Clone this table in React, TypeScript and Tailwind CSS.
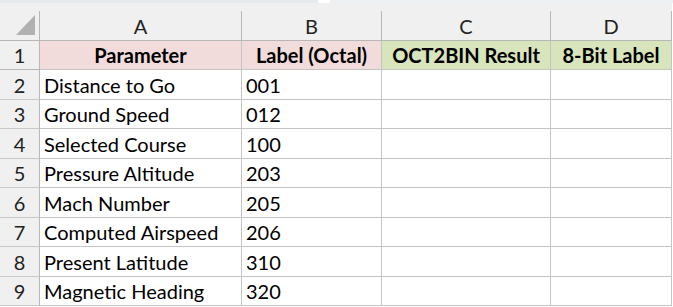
import React from "react";

const rows: [string, string][] = [
  ["Distance to Go", "001"],
  ["Ground Speed", "012"],
  ["Selected Course", "100"],
  ["Pressure Altitude", "203"],
  ["Mach Number", "205"],
  ["Computed Airspeed", "206"],
  ["Present Latitude", "310"],
  ["Magnetic Heading", "320"],
];

const heights = ["h-[30px]", "h-[29px]", "h-[30px]", "h-[29px]", "h-[30px]", "h-[29px]", "h-[30px]", "h-[29px]"];

export default function App() {
  return (
    <div
      className="w-[673px] h-[307px] bg-white overflow-hidden text-black"
      style={{ fontFamily: "Lato, 'Liberation Sans', sans-serif" }}
    >
      <div className="flex h-[3px]">
        <div className="w-[318px] bg-[#e6eaef]" />
        <div className="w-[12px] bg-white" />
        <div className="flex-1 bg-[#eef1f4]" />
      </div>
      <div className="h-[8px] w-[672px] bg-[#f0f0f0]" />
      {/* column header row */}
      <div className="flex h-[30px] text-[20px] text-[#222]">
        <div className="relative w-[40px] bg-[#f0f0f0] border-r border-b border-[#b7b7b7]">
          <svg className="absolute left-[16px] top-[4px]" width="20" height="20" viewBox="0 0 20 20">
            <polygon points="19,0 19,20 0,20" fill="#b1b1b1" />
          </svg>
        </div>
        <div className="w-[202px] bg-[#f0f0f0] border-r border-b border-[#b7b7b7] flex items-center justify-center">A</div>
        <div className="w-[140px] bg-[#f0f0f0] border-r border-b border-[#b7b7b7] flex items-center justify-center">B</div>
        <div className="w-[169px] bg-[#f0f0f0] border-r border-b border-[#b7b7b7] flex items-center justify-center">C</div>
        <div className="w-[121px] bg-[#f0f0f0] border-r border-b border-[#b7b7b7] flex items-center justify-center">D</div>
      </div>
      {/* row 1 */}
      <div className="flex h-[29px] text-[20px]">
        <div className="w-[40px] bg-[#f0f0f0] border-r border-b border-[#b7b7b7] flex items-center justify-center text-[#222]">1</div>
        <div className="w-[202px] bg-[#f2dcdb] border-r border-b border-[#c4c4c4] flex items-center justify-center font-bold">Parameter</div>
        <div className="w-[140px] bg-[#f2dcdb] border-r border-b border-[#c4c4c4] flex items-center justify-center font-bold whitespace-nowrap">Label (Octal)</div>
        <div className="w-[169px] bg-[#d8e4bc] border-r border-b border-[#c4c4c4] flex items-center justify-center font-bold whitespace-nowrap">OCT2BIN Result</div>
        <div className="w-[121px] bg-[#d8e4bc] border-r border-b border-[#c4c4c4] flex items-center justify-center font-bold whitespace-nowrap">8-Bit Label</div>
      </div>
      {rows.map(([a, b], i) => (
        <div key={i} className={`flex text-[20px] ${heights[i]}`}>
          <div className="w-[40px] bg-[#f0f0f0] border-r border-b border-[#c8c8c8] flex items-center justify-center text-[#222]" style={{ borderRightColor: "#b7b7b7" }}>
            {i + 2}
          </div>
          <div className="w-[202px] border-r border-b border-[#c4c4c4] flex items-center pl-[4px] whitespace-nowrap">{a}</div>
          <div className="w-[140px] border-r border-b border-[#c4c4c4] flex items-center pl-[4px]">{b}</div>
          <div className="w-[169px] border-r border-b border-[#c4c4c4]" />
          <div className="w-[121px] border-r border-b border-[#c4c4c4]" />
        </div>
      ))}
    </div>
  );
}
